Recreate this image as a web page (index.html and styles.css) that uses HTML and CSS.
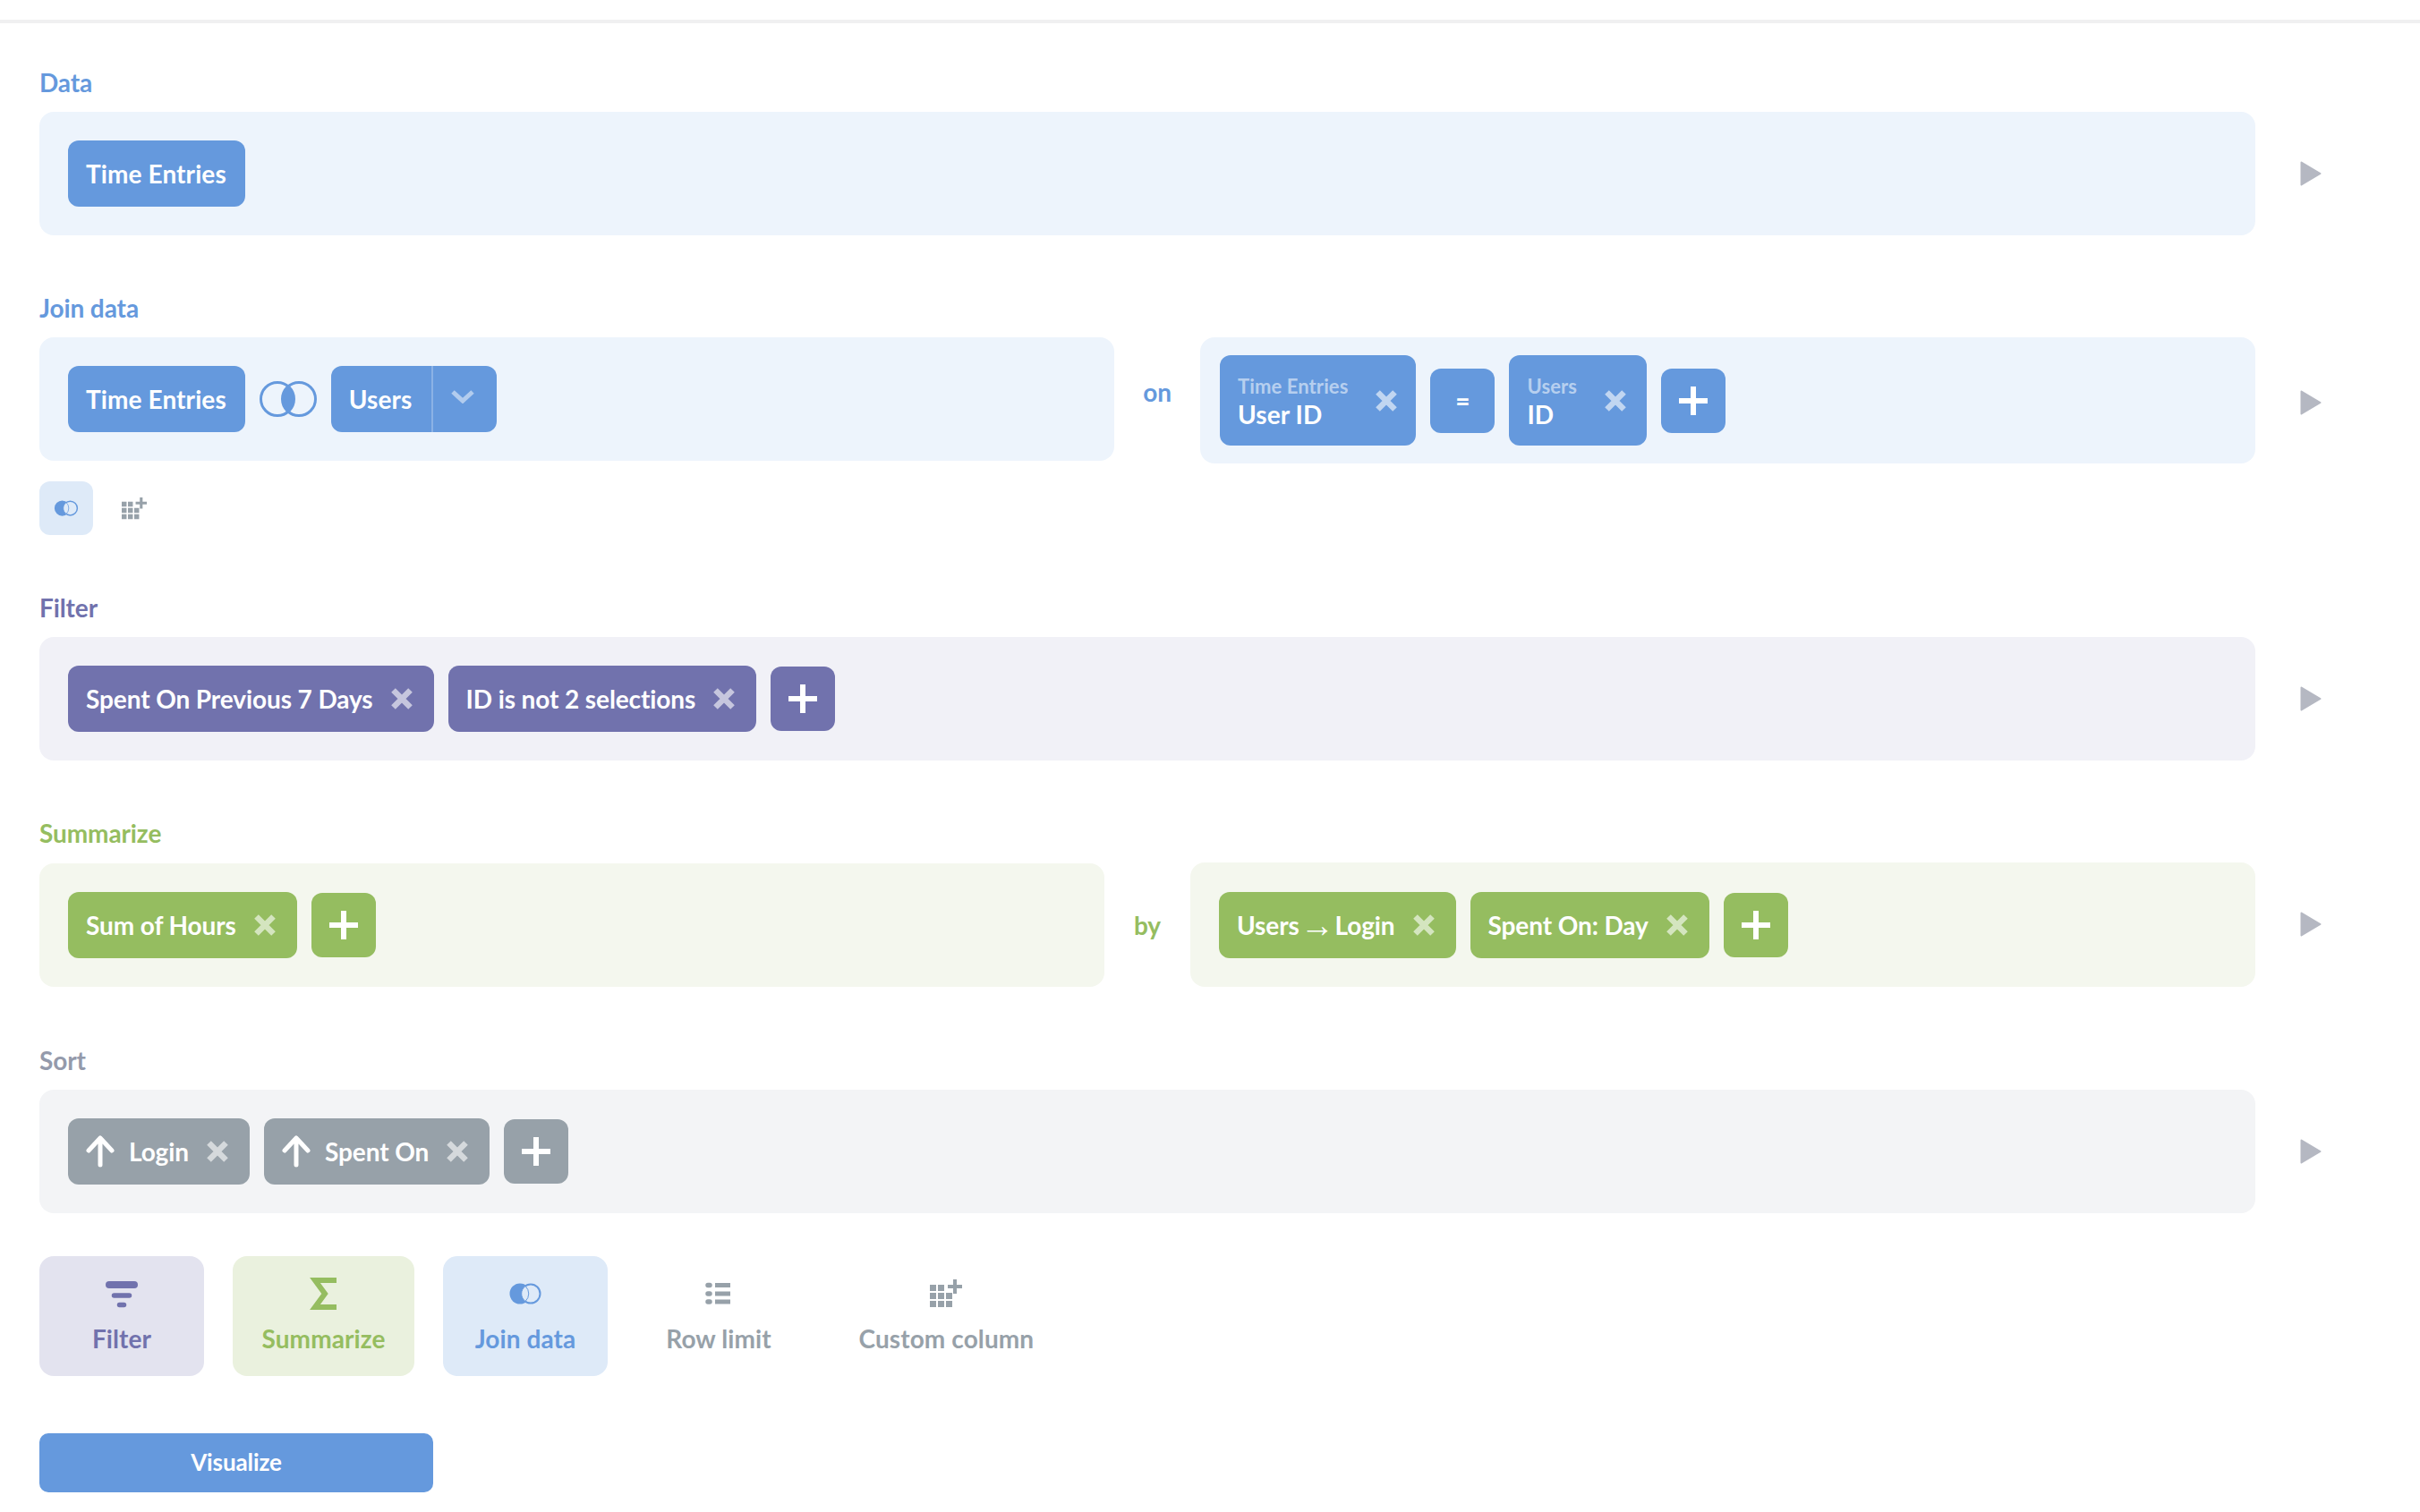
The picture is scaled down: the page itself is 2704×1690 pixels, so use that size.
FILE: index.html
```html
<!DOCTYPE html>
<html lang="en">
<head>
    <meta charset="UTF-8">
    <meta name="viewport" content="width=device-width, initial-scale=1.0">
    <title>Notebook</title>
    <link rel="stylesheet" href="styles.css">
</head>
<body>
    <svg class="icon-defs" xmlns="http://www.w3.org/2000/svg">
        <symbol id="i-close" viewBox="0 0 24 24">
            <path d="M2.5 2.5 L21.5 21.5 M21.5 2.5 L2.5 21.5" fill="none" stroke="currentColor" stroke-width="6.5"/>
        </symbol>
        <symbol id="i-plus" viewBox="0 0 32 32">
            <path d="M16 0 V32 M0 16 H32" fill="none" stroke="currentColor" stroke-width="6"/>
        </symbol>
        <symbol id="i-play" viewBox="0 0 24 28">
            <path d="M1.5 1.5 L22.5 14 L1.5 26.5 Z" fill="currentColor" stroke="currentColor" stroke-width="2" stroke-linejoin="round"/>
        </symbol>
        <symbol id="i-up" viewBox="0 0 32 36">
            <path d="M16 33 V3 M3 17 L16 3 L29 17" fill="none" stroke="currentColor" stroke-width="5" stroke-linecap="round" stroke-linejoin="round"/>
        </symbol>
        <symbol id="i-venn" viewBox="0 0 36 24">
            <circle cx="12" cy="12" r="11.5" fill="currentColor"/>
            <circle cx="24" cy="12" r="10.5" fill="#deeaf8" stroke="currentColor" stroke-width="2"/>
            <path d="M18 3.5 A10.5 10.5 0 0 0 18 20.5 A11.5 11.5 0 0 0 18 3.5 Z" fill="#deeaf8" stroke="currentColor" stroke-width="1"/>
        </symbol>
        <symbol id="i-grid" viewBox="0 0 36 32">
            <path d="M0 6 H7 V13 H0 Z M9 6 H16 V13 H9 Z M0 15 H7 V22 H0 Z M9 15 H16 V22 H9 Z M18 15 H25 V22 H18 Z M0 24 H7 V31 H0 Z M9 24 H16 V31 H9 Z M18 24 H25 V31 H18 Z" fill="currentColor"/>
            <path d="M28 0 V16 M20 8 H36" fill="none" stroke="currentColor" stroke-width="4"/>
        </symbol>
    </svg>

    <div class="topbar"></div>

    <div class="notebook">
        <div class="section">
            <div class="section-title blue-text">Data</div>
            <div class="row">
                <div class="step-box blue-box grow">
                    <div class="chip blue">Time Entries</div>
                </div>
                <svg class="play"><use href="#i-play"/></svg>
            </div>
        </div>

        <div class="section">
            <div class="section-title blue-text">Join data</div>
            <div class="row">
                <div class="step-box blue-box join-left">
                    <div class="chip blue">Time Entries</div>
                    <svg class="join-type" viewBox="0 0 64 40">
                        <path d="M32 6 A19 19 0 0 0 32 34 A19 19 0 0 0 32 6 Z" fill="#6599dd"/>
                        <circle cx="20" cy="20" r="18.5" fill="none" stroke="#6599dd" stroke-width="3"/>
                        <circle cx="44" cy="20" r="18.5" fill="none" stroke="#6599dd" stroke-width="3"/>
                    </svg>
                    <div class="chip blue split">
                        <span class="split-main">Users</span>
                        <span class="split-arrow">
                            <svg class="chevron" viewBox="0 0 26 16"><path d="M2 3 L13 13 L24 3" fill="none" stroke="currentColor" stroke-width="5"/></svg>
                        </span>
                    </div>
                </div>
                <div class="connector blue-text">on</div>
                <div class="step-box blue-box grow tall tight">
                    <div class="chip blue two-line">
                        <div class="chip-stack">
                            <span class="chip-sub">Time Entries</span>
                            <span class="chip-value">User ID</span>
                        </div>
                        <svg class="close"><use href="#i-close"/></svg>
                    </div>
                    <div class="chip blue square">=</div>
                    <div class="chip blue two-line">
                        <div class="chip-stack">
                            <span class="chip-sub">Users</span>
                            <span class="chip-value">ID</span>
                        </div>
                        <svg class="close"><use href="#i-close"/></svg>
                    </div>
                    <div class="chip blue square"><svg class="plus"><use href="#i-plus"/></svg></div>
                </div>
                <svg class="play play-low"><use href="#i-play"/></svg>
            </div>
            <div class="mini-actions">
                <div class="mini-btn active"><svg class="mini-venn"><use href="#i-venn"/></svg></div>
                <div class="mini-btn"><svg class="mini-grid"><use href="#i-grid"/></svg></div>
            </div>
        </div>

        <div class="section">
            <div class="section-title purple-text">Filter</div>
            <div class="row">
                <div class="step-box purple-box grow">
                    <div class="chip purple">Spent On Previous 7 Days<svg class="close"><use href="#i-close"/></svg></div>
                    <div class="chip purple">ID is not 2 selections<svg class="close"><use href="#i-close"/></svg></div>
                    <div class="chip purple square"><svg class="plus"><use href="#i-plus"/></svg></div>
                </div>
                <svg class="play"><use href="#i-play"/></svg>
            </div>
        </div>

        <div class="section">
            <div class="section-title green-text">Summarize</div>
            <div class="row">
                <div class="step-box green-box summarize-left">
                    <div class="chip green">Sum of Hours<svg class="close"><use href="#i-close"/></svg></div>
                    <div class="chip green square"><svg class="plus"><use href="#i-plus"/></svg></div>
                </div>
                <div class="connector connector-mid green-text">by</div>
                <div class="step-box green-box grow summarize-right">
                    <div class="chip green">Users<span class="thin-arrow">→</span>Login<svg class="close"><use href="#i-close"/></svg></div>
                    <div class="chip green">Spent On: Day<svg class="close"><use href="#i-close"/></svg></div>
                    <div class="chip green square"><svg class="plus"><use href="#i-plus"/></svg></div>
                </div>
                <svg class="play"><use href="#i-play"/></svg>
            </div>
        </div>

        <div class="section">
            <div class="section-title gray-text">Sort</div>
            <div class="row">
                <div class="step-box gray-box grow">
                    <div class="chip gray"><svg class="up"><use href="#i-up"/></svg>Login<svg class="close"><use href="#i-close"/></svg></div>
                    <div class="chip gray"><svg class="up"><use href="#i-up"/></svg>Spent On<svg class="close"><use href="#i-close"/></svg></div>
                    <div class="chip gray square"><svg class="plus"><use href="#i-plus"/></svg></div>
                </div>
                <svg class="play"><use href="#i-play"/></svg>
            </div>
        </div>

        <div class="actions">
            <div class="action action-filter">
                <svg class="action-icon" viewBox="0 0 36 36">
                    <path d="M4 8 H32" fill="none" stroke="currentColor" stroke-width="8" stroke-linecap="round"/>
                    <path d="M9.5 20 H26.5 M15.5 30.5 H20.5" fill="none" stroke="currentColor" stroke-width="5.5" stroke-linecap="round"/>
                </svg>
                <span>Filter</span>
            </div>
            <div class="action action-summarize">
                <svg class="action-icon" viewBox="0 0 36 36">
                    <path d="M32 3 H8 L19 18 L8 33 H32" fill="none" stroke="currentColor" stroke-width="6"/>
                </svg>
                <span>Summarize</span>
            </div>
            <div class="action action-join">
                <svg class="action-icon"><use href="#i-venn"/></svg>
                <span>Join data</span>
            </div>
            <div class="action action-plain">
                <svg class="action-icon" viewBox="0 0 36 36">
                    <path d="M6 8.5 H8 M6 18 H8 M6 27 H8" fill="none" stroke="currentColor" stroke-width="5.5" stroke-linecap="round"/>
                    <path d="M14 8.5 H31 M14 18 H31 M14 27 H31" fill="none" stroke="currentColor" stroke-width="5"/>
                </svg>
                <span>Row limit</span>
            </div>
            <div class="action action-plain">
                <svg class="action-icon"><use href="#i-grid"/></svg>
                <span>Custom column</span>
            </div>
        </div>

        <div class="visualize">Visualize</div>
    </div>
</body>
</html>
```

FILE: styles.css
```css
body {
    margin: 0;
    background-color: #fff;
    font-family: Lato, "Open Sans", sans-serif;
    font-weight: 700;
    font-size: 28px;
    line-height: 34px;
    letter-spacing: -0.1px;
}
.icon-defs {
    display: none;
}
.topbar {
    height: 22px;
    border-bottom: 4px solid #f0f0f1;
}
.notebook {
    padding: 49px 44px 0;
}
.section {
    margin-bottom: 64px;
}
.section-title {
    margin-bottom: 16px;
}
.row {
    display: flex;
    align-items: flex-start;
}
.step-box {
    display: flex;
    align-items: center;
    gap: 16px;
    height: 138px;
    box-sizing: border-box;
    padding: 0 32px;
    border-radius: 16px;
}
.grow {
    flex: 1;
}
.tall {
    height: 141px;
}
.tight {
    padding-left: 22px;
}
.join-left {
    width: 1201px;
}
.summarize-left {
    width: 1190px;
    margin-top: 1px;
}
.summarize-right {
    height: 139px;
}
.connector {
    width: 96px;
    height: 122px;
    display: flex;
    align-items: center;
    justify-content: center;
    flex-shrink: 0;
}
.connector-mid {
    height: 140px;
}
.play {
    width: 24px;
    height: 28px;
    margin: 55px 66px 0 50px;
    color: #b5b8c2;
}
.play-low {
    margin-top: 59px;
}
.blue-box { background-color: #edf4fc; }
.purple-box { background-color: #f1f1f7; }
.green-box { background-color: #f4f7ee; }
.gray-box { background-color: #f3f4f6; }
.blue-text { color: #6599dd; }
.purple-text { color: #7172ad; }
.green-text { color: #95bd60; }
.gray-text { color: #949aab; }

.chip {
    display: flex;
    align-items: center;
    height: 74px;
    box-sizing: border-box;
    padding: 0 24px 0 20px;
    border-radius: 12px;
    color: #fff;
    white-space: pre;
}
.blue {
    background-color: #6599dd;
    letter-spacing: 0.1px;
}
.purple { background-color: #7172ad; }
.green { background-color: #95bd60; }
.gray { background-color: #97a1a9; }
.blue:first-child {
    padding-right: 21px;
}
.square {
    width: 72px;
    height: 72px;
    padding: 0;
    justify-content: center;
}
.two-line {
    height: 101px;
    padding-right: 23px;
}
.chip-stack {
    display: flex;
    flex-direction: column;
    margin-right: 11px;
}
.chip-sub {
    font-size: 22px;
    line-height: 30px;
    color: rgba(255, 255, 255, 0.55);
}
.chip-value {
    line-height: 32px;
}
.close {
    width: 24px;
    height: 24px;
    margin-left: 20px;
    color: rgba(255, 255, 255, 0.6);
}
.plus {
    width: 32px;
    height: 32px;
}
.up {
    width: 32px;
    height: 36px;
    margin-right: 16px;
}
.thin-arrow {
    margin: 0 1px;
    font-family: "Liberation Sans", sans-serif;
    font-weight: 400;
    font-size: 38px;
}
.join-type {
    width: 64px;
    height: 40px;
}
.split {
    padding: 0;
    width: 185px;
}
.split-main {
    width: 112px;
    padding-left: 20px;
    box-sizing: border-box;
}
.split-arrow {
    display: flex;
    align-items: center;
    justify-content: center;
    flex: 1;
    height: 100%;
    border-left: 2px solid rgba(255, 255, 255, 0.25);
    color: rgba(255, 255, 255, 0.5);
}
.chevron {
    width: 26px;
    height: 16px;
    margin: 0 4px 6px 0;
}
.mini-actions {
    display: flex;
    gap: 16px;
    margin-top: 20px;
}
.mini-btn {
    display: flex;
    align-items: center;
    justify-content: center;
    width: 60px;
    height: 60px;
    border-radius: 12px;
    color: #97a1a9;
}
.mini-btn.active {
    background-color: #deeaf8;
    color: #6599dd;
}
.mini-venn {
    width: 28px;
    height: 18px;
}
.mini-grid {
    width: 28px;
    height: 25px;
}

.actions {
    display: flex;
    gap: 32px;
    margin-top: -16px;
    letter-spacing: 0.1px;
}
.action {
    display: flex;
    flex-direction: column;
    align-items: center;
    min-width: 184px;
    height: 134px;
    box-sizing: border-box;
    padding: 24px 32.5px 0;
    border-radius: 16px;
}
.action-icon {
    width: 36px;
    height: 36px;
    margin-bottom: 15px;
}
.action-filter {
    background-color: #e3e3ef;
    color: #7172ad;
}
.action-summarize {
    background-color: #eaf1de;
    color: #95bd60;
}
.action-join {
    background-color: #deeaf8;
    color: #6599dd;
}
.action-plain {
    color: #97a1a9;
}
.visualize {
    display: flex;
    align-items: center;
    justify-content: center;
    width: 440px;
    height: 66px;
    box-sizing: border-box;
    padding-bottom: 2px;
    margin-top: 64px;
    border-radius: 10px;
    background-color: #6599dd;
    color: #fff;
    font-size: 26px;
}
```
